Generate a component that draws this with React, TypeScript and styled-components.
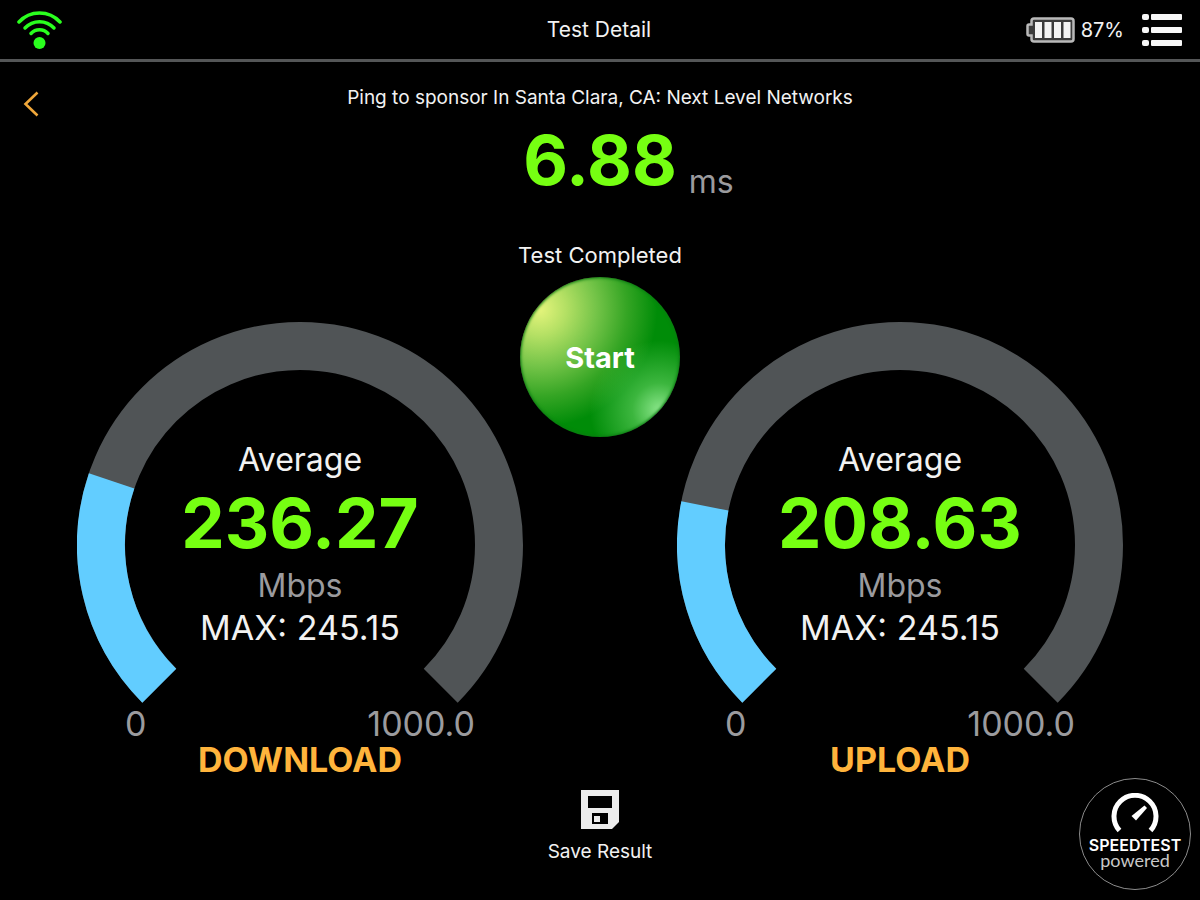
import React from "react";
import styled, { createGlobalStyle } from "styled-components";

const GlobalStyle = createGlobalStyle`
  *, *::before, *::after { box-sizing: border-box; }
  body {
    margin: 0;
    background: #000;
    color: #f2f2f2;
    font-family: Inter, "Liberation Sans", sans-serif;
  }
  h1, h2, p { margin: 0; }
  button {
    margin: 0;
    padding: 0;
    border: 0;
    background: none;
    color: inherit;
    font: inherit;
    cursor: pointer;
  }
  svg { display: block; }
`;

const Page = styled.div`
  display: flex;
  flex-direction: column;
  min-height: 100vh;
`;

const TopBar = styled.header`
  display: grid;
  grid-template-columns: 1fr auto 1fr;
  align-items: center;
  height: 62px;
  padding: 0 18px 0 16px;
  border-bottom: 3px solid #545657;
`;

const Title = styled.h1`
  font-size: 21px;
  font-weight: 400;
  line-height: 28px;
`;

const Status = styled.div`
  display: flex;
  align-items: center;
  justify-content: flex-end;
  gap: 6px;
`;

const BatteryText = styled.span`
  margin-right: 12px;
  font-size: 20px;
  line-height: 28px;
`;

const BackButton = styled.button`
  position: absolute;
  top: 84px;
  left: 16px;
  padding: 7px;
`;

const Board = styled.main`
  display: grid;
  grid-template-columns: 1fr 1fr;
  grid-template-rows: 260px auto;
`;

const Summary = styled.section`
  grid-area: 1 / 1 / 3 / 3;
  display: flex;
  flex-direction: column;
  align-items: center;
  align-self: start;
  justify-self: center;
  padding-top: 22px;
`;

const Sponsor = styled.p`
  font-size: 19px;
  line-height: 28px;
`;

const PingValue = styled.p`
  display: grid;
  grid-template-columns: 1fr auto 1fr;
  align-self: stretch;
  column-gap: 12px;
  margin-top: 6px;
`;

const Figure = styled.strong`
  grid-column: 2;
  color: #76ff12;
  font-size: 69px;
  font-weight: 700;
  line-height: 84px;
`;

const PingUnit = styled.span`
  align-self: end;
  color: #9b9b9e;
  font-size: 32px;
  line-height: 40px;
`;

const State = styled.p`
  margin-top: 39px;
  font-size: 22px;
  line-height: 28px;
`;

const StartButton = styled.button`
  width: 160px;
  height: 160px;
  margin-top: 8px;
  border-radius: 50%;
  background:
    radial-gradient(circle at 87% 83%, #8ae68a 0, rgba(80, 196, 80, 0.75) 14%, rgba(0, 140, 8, 0) 36%),
    radial-gradient(circle at 12% 20%, #e6f57c 0, #b4e064 14%, #74c448 30%, #35a524 46%, #008c08 62%);
  box-shadow: inset 0 0 3px 1px #0b7a12;
  color: #fff;
  font-size: 29px;
  font-weight: 700;
`;

const GaugeCard = styled.section<{ $column: number }>`
  grid-row: 2;
  grid-column: ${(p) => p.$column};
  display: grid;
  justify-items: center;
  padding: 0 32px;
`;

const Dial = styled.svg`
  grid-area: 1 / 1;
  width: 100%;
  max-width: 446px;
`;

const Readout = styled.div`
  grid-area: 1 / 1;
  display: flex;
  flex-direction: column;
  align-items: center;
  padding-top: 117px;
  font-size: 32px;
  line-height: 42px;
`;

const Unit = styled.span`
  color: #9b9b9e;
`;

const Peak = styled.span`
  font-size: 34px;
`;

const Scale = styled.div`
  display: flex;
  justify-content: space-between;
  width: 100%;
  max-width: 350px;
  padding-top: 2px;
  color: #9b9b9e;
  font-size: 34px;
  line-height: 36px;
`;

const GaugeName = styled.h2`
  color: #ffb43c;
  font-size: 34px;
  font-weight: 700;
  line-height: 36px;
`;

const BottomBar = styled.footer`
  display: grid;
  grid-template-columns: 1fr auto 1fr;
  padding: 0 9px 9px;
`;

const SaveButton = styled.button`
  grid-column: 2;
  display: flex;
  flex-direction: column;
  align-items: center;
  align-self: start;
  gap: 9px;
  padding-top: 12px;
  font-size: 19px;
  line-height: 28px;
`;

const Badge = styled.a`
  display: flex;
  flex-direction: column;
  align-items: center;
  justify-self: end;
  width: 112px;
  height: 112px;
  padding-top: 14px;
  border: 1px solid #8c8c8c;
  border-radius: 50%;
  color: #fff;
  text-decoration: none;
`;

const BadgeName = styled.span`
  font-size: 16px;
  font-weight: 600;
  line-height: 20px;
`;

const BadgeNote = styled.span`
  color: #c8c8c8;
  font-family: Lato, sans-serif;
  font-size: 18px;
  line-height: 10px;
`;

const WifiIcon = () => (
  <svg width="46" height="40" viewBox="0 0 46 40" fill="none" stroke="#2aff1e" strokeWidth="3.500" strokeLinecap="round" role="img" aria-label="Wi-Fi connected">
    <path d="M3 12C14 0 33 0 44 12" />
    <path d="M9 18C17 9.500 30 9.500 38 18" />
    <path d="M15 23.500C19.500 18.500 27.500 18.500 32 23.500" />
    <circle cx="23.500" cy="33" r="6" fill="#2aff1e" stroke="none" />
  </svg>
);

const BatteryIcon = () => (
  <svg width="49" height="26" viewBox="0 0 49 26" aria-hidden="true">
    <path d="M8 1.500H45Q47.500 1.500 47.500 4V22Q47.500 24.500 45 24.500H8Q5.500 24.500 5.500 22V18.500H3Q1.500 18.500 1.500 17V9Q1.500 7.500 3 7.500H5.500V4Q5.500 1.500 8 1.500Z" fill="#3c3c3c" stroke="#b9b9b9" strokeWidth="2.500" />
    <path d="M9 5H16V21H9ZM18.500 5H25.500V21H18.500ZM28 5H35V21H28ZM37.500 5H44.500V21H37.500Z" fill="#f4f4f4" />
  </svg>
);

const MenuIcon = () => (
  <svg width="40" height="32" viewBox="0 0 40 32" fill="#f7f7f7" aria-hidden="true">
    {[0, 13, 26].map((y) => (
      <React.Fragment key={y}>
        <rect x="0" y={y} width="7" height="6" rx="2" />
        <rect x="9" y={y} width="31" height="6" rx="1" />
      </React.Fragment>
    ))}
  </svg>
);

const ChevronIcon = () => (
  <svg width="16" height="26" viewBox="0 0 16 26" fill="none" stroke="#f0a73a" strokeWidth="2.600" aria-hidden="true">
    <path d="M14.500 1.500L2.500 13L14.500 24.500" />
  </svg>
);

const DiskIcon = () => (
  <svg width="38" height="39" viewBox="0 0 38 39" aria-hidden="true">
    <path d="M0 0H38V32L31 39H0Z" fill="#ececec" />
    <path d="M7 6H31V18H7ZM11 23H27V34H11Z" fill="#000" />
    <rect x="13" y="26" width="6" height="6" fill="#ececec" />
  </svg>
);

const SpeedIcon = () => (
  <svg width="48" height="42" viewBox="0 0 48 42" fill="none" stroke="#fff" aria-hidden="true">
    <path d="M8.500 37.500A21 21 0 1 1 39.500 37.500" strokeWidth="5" />
    <path d="M33.500 12.500L36 15L25 27.500L20.500 23Z" fill="#fff" stroke="none" />
  </svg>
);

const RADIUS = 199;
const CENTER = 223;
const SWEEP = 270;

function arc(fromDeg: number, toDeg: number) {
  const point = (deg: number) => {
    const a = ((135 + deg) * Math.PI) / 180;
    return `${CENTER + RADIUS * Math.cos(a)} ${CENTER + RADIUS * Math.sin(a)}`;
  };
  const large = toDeg - fromDeg > 180 ? 1 : 0;
  return `M${point(fromDeg)}A${RADIUS} ${RADIUS} 0 ${large} 1 ${point(toDeg)}`;
}

interface GaugeProps {
  column: number;
  name: string;
  average: number;
  peak: number;
  limit: number;
}

function Gauge({ column, name, average, peak, limit }: GaugeProps) {
  const filled = (average / limit) * SWEEP;
  return (
    <GaugeCard $column={column}>
      <Dial viewBox="0 0 446 382" fill="none" strokeWidth="48" aria-hidden="true">
        <path d={arc(0, SWEEP)} stroke="#505456" />
        <path d={arc(0, filled)} stroke="#62cdff" />
      </Dial>
      <Readout>
        <span>Average</span>
        <Figure>{average.toFixed(2)}</Figure>
        <Unit>Mbps</Unit>
        <Peak>MAX: {peak.toFixed(2)}</Peak>
      </Readout>
      <Scale>
        <span>0</span>
        <span>{limit.toFixed(1)}</span>
      </Scale>
      <GaugeName>{name}</GaugeName>
    </GaugeCard>
  );
}

export default function App() {
  return (
    <Page>
      <GlobalStyle />
      <TopBar>
        <WifiIcon />
        <Title>Test Detail</Title>
        <Status>
          <BatteryIcon />
          <BatteryText>87%</BatteryText>
          <button type="button" aria-label="Menu">
            <MenuIcon />
          </button>
        </Status>
      </TopBar>
      <BackButton type="button" aria-label="Back">
        <ChevronIcon />
      </BackButton>
      <Board>
        <Gauge column={1} name="DOWNLOAD" average={236.27} peak={245.15} limit={1000} />
        <Gauge column={2} name="UPLOAD" average={208.63} peak={245.15} limit={1000} />
        <Summary>
          <Sponsor>Ping to sponsor In Santa Clara, CA: Next Level Networks</Sponsor>
          <PingValue>
            <Figure>6.88</Figure>
            <PingUnit>ms</PingUnit>
          </PingValue>
          <State>Test Completed</State>
          <StartButton type="button">Start</StartButton>
        </Summary>
      </Board>
      <BottomBar>
        <SaveButton type="button">
          <DiskIcon />
          Save Result
        </SaveButton>
        <Badge href="#speedtest">
          <SpeedIcon />
          <BadgeName>SPEEDTEST</BadgeName>
          <BadgeNote>powered</BadgeNote>
        </Badge>
      </BottomBar>
    </Page>
  );
}
